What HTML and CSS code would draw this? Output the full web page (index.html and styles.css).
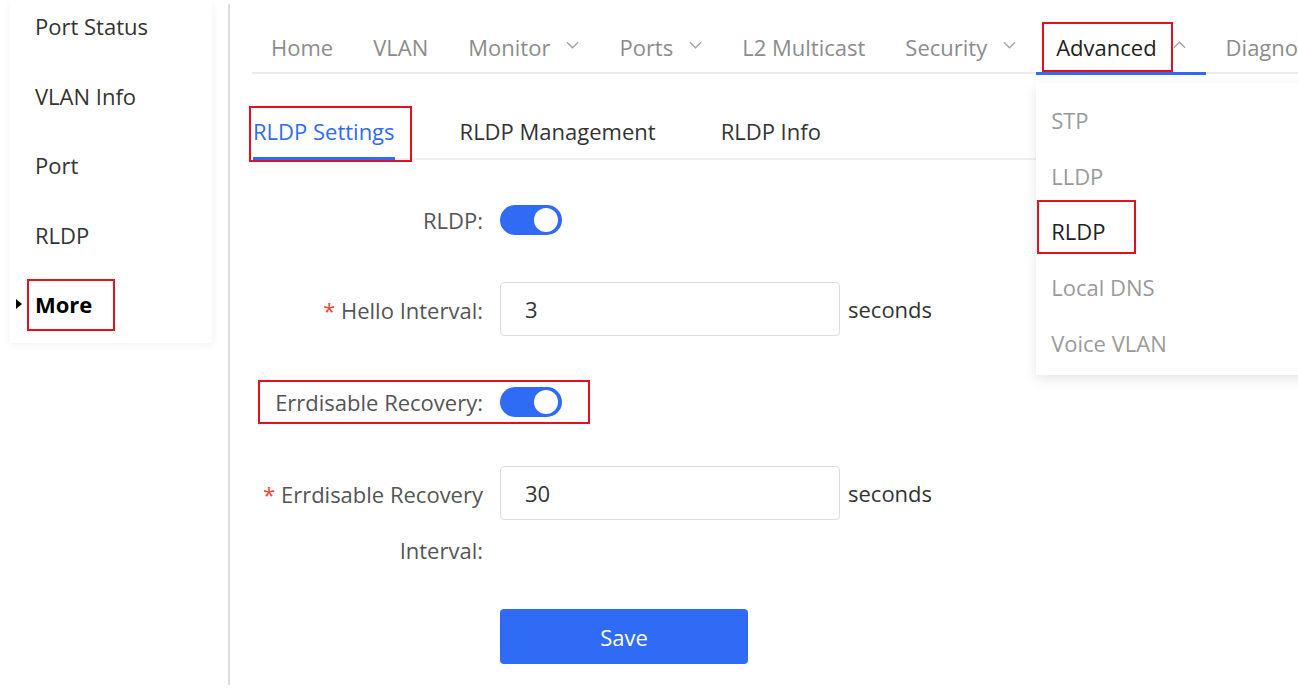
FILE: index.html
```html
<!DOCTYPE html>
<html lang="en">
<head>
    <meta charset="UTF-8">
    <meta name="viewport" content="width=device-width, initial-scale=1.0">
    <title>RLDP Settings</title>
    <link rel="stylesheet" href="styles.css">
</head>
<body>
    <div class="page">
        <aside class="side">
            <ul class="side_menu">
                <li class="side_item">Port Status</li>
                <li class="side_item">VLAN Info</li>
                <li class="side_item">Port</li>
                <li class="side_item">RLDP</li>
                <li class="side_item side_item-more"><span class="mark mark-more">More</span></li>
            </ul>
        </aside>

        <main class="main">
            <nav class="topnav">
                <span class="nav_item">Home</span>
                <span class="nav_item">VLAN</span>
                <span class="nav_item">Monitor
                    <svg class="chev" viewBox="0 0 14 8"><path d="M1 1l6 6 6-6"/></svg></span>
                <span class="nav_item">Ports
                    <svg class="chev" viewBox="0 0 14 8"><path d="M1 1l6 6 6-6"/></svg></span>
                <span class="nav_item">L2 Multicast</span>
                <span class="nav_item">Security
                    <svg class="chev" viewBox="0 0 14 8"><path d="M1 1l6 6 6-6"/></svg></span>
                <span class="nav_item nav_item-active"><span class="mark mark-adv">Advanced</span>
                    <svg class="chev" viewBox="0 0 14 8"><path d="M1 7l6-6 6 6"/></svg>

                    <!-- open dropdown of Advanced -->
                    <ul class="dropdown">
                        <li class="dropdown_item">STP</li>
                        <li class="dropdown_item">LLDP</li>
                        <li class="dropdown_item dropdown_item-current"><span class="mark mark-drop">RLDP</span></li>
                        <li class="dropdown_item">Local DNS</li>
                        <li class="dropdown_item">Voice VLAN</li>
                    </ul>
                </span>
                <span class="nav_item">Diagnostics</span>
            </nav>

            <div class="tabs">
                <span class="tab tab-active"><span class="mark mark-tab">RLDP Settings</span></span>
                <span class="tab">RLDP Management</span>
                <span class="tab">RLDP Info</span>
            </div>

            <div class="form">
                <div class="form_row form_row-first">
                    <label class="form_label">RLDP:</label>
                    <span class="switch"></span>
                </div>

                <div class="form_row">
                    <label class="form_label"><i class="req">*</i> Hello Interval:</label>
                    <input class="form_input" type="text" value="3">
                    <span class="unit">seconds</span>
                </div>

                <div class="form_row form_row-err">
                    <span class="mark mark-err"></span>
                    <label class="form_label">Errdisable Recovery:</label>
                    <span class="switch"></span>
                </div>

                <div class="form_row">
                    <label class="form_label"><i class="req">*</i> Errdisable Recovery Interval:</label>
                    <input class="form_input" type="text" value="30">
                    <span class="unit">seconds</span>
                </div>

                <div class="form_actions">
                    <button class="btn_save" type="button">Save</button>
                </div>
            </div>
        </main>
    </div>
</body>
</html>
```

FILE: styles.css
```css
body{
    margin: 0;
    padding: 0;
    background-color: #ffffff;
    font-family: "Open Sans", "Noto Sans", Arial, sans-serif;
    font-size: 22px;
    color: #333;
    overflow: hidden;
}

ul{
    list-style: none;
    margin: 0;
    padding: 0;
}

.page{
    display: flex;
    width: 1298px;
    height: 696px;
    overflow: hidden;
}

/* annotation boxes */
.mark{
    position: relative;
}

.mark::after{
    content: "";
    position: absolute;
    border: 2px solid #e3101f;
    pointer-events: none;
}

.mark-more::after{ left: -8px; right: -23px; top: -10px; bottom: -12px; }
.mark-adv::after{ left: -14px; right: -16px; top: -10px; bottom: -10px; }
.mark-drop::after{ left: -14px; right: -31px; top: -16px; bottom: -8px; }
.mark-tab::after{ left: -4px; right: -17px; top: -10px; bottom: -16px; }

/* side menu */
.side{
    width: 218px;
    padding-left: 10px;
    flex-shrink: 0;
}

.side_menu{
    width: 202px;
    height: 343px;
    background-color: #fff;
    box-shadow: 0px 2px 8px rgba(0, 0, 0, 0.06);
    box-sizing: border-box;
    padding-left: 25px;
}

.side_item{
    height: 69.5px;
    line-height: 53px;
    color: #333;
}

.side_item-more{
    position: relative;
    font-weight: bold;
    color: #000;
}

.side_item-more::before{
    content: "";
    position: absolute;
    left: -19px;
    top: 21px;
    border-left: 6px solid #000;
    border-top: 5px solid transparent;
    border-bottom: 5px solid transparent;
}

/* main area */
.main{
    height: 685px;
    border-left: 2px solid #dcdcdc;
    border-image: linear-gradient(to bottom, transparent 5px, #dcdcdc 5px) 1;
    padding-left: 22px;
    flex: 1;
    min-width: 0;
    overflow: hidden;
}

.topnav{
    display: flex;
    height: 74px;
    border-bottom: 2px solid #ebebeb;
    white-space: nowrap;
    box-sizing: border-box;
    padding-top: 19px;
}

.nav_item{
    position: relative;
    display: flex;
    align-items: center;
    height: 55px;
    padding: 0 20px;
    color: #8c8c8c;
    box-sizing: border-box;
    flex-shrink: 0;
}

.nav_item:first-child{
    padding-left: 19px;
}

.nav_item-active{
    color: #222;
    border-bottom: 3px solid #2f6bf5;
    height: 56px;
    padding-top: 2px;
}

.chev{
    width: 13px;
    height: 8px;
    margin-left: 16px;
    margin-top: -4px;
    fill: none;
    stroke: #a0a0a0;
    stroke-width: 1.3;
}

.dropdown{
    position: absolute;
    top: 64px;
    left: 0;
    width: 280px;
    height: 292px;
    padding-top: 10px;
    box-sizing: border-box;
    background-color: #fff;
    box-shadow: 0px 4px 12px rgba(0, 0, 0, 0.1);
    z-index: 5;
}

.dropdown_item{
    height: 55.7px;
    line-height: 55px;
    padding-left: 15px;
    color: #9a9a9a;
}

.dropdown_item-current{
    color: #222;
}

/* sub tabs */
.tabs{
    display: flex;
    margin-top: 31px;
    height: 53px;
    border-bottom: 2px solid #eef0f4;
    width: 785px;
}

.tab{
    line-height: 52px;
    margin-right: 65px;
    color: #333;
    white-space: nowrap;
}

.tab-active{
    color: #2f6bf5;
    border-bottom: 3px solid #2f6bf5;
    margin-bottom: -2px;
    margin-left: 1px;
}

/* form */
.form{
    padding-top: 32px;
}

.form_row{
    position: relative;
    display: flex;
    align-items: flex-start;
    margin-bottom: 36px;
}

.form_row-first{
    margin-bottom: 34px;
}

.form_label{
    width: 231px;
    margin-right: 17px;
    text-align: right;
    line-height: 56px;
    color: #555;
    flex-shrink: 0;
}

.req{
    font-style: normal;
    color: #f0462f;
}

.switch{
    position: relative;
    width: 62px;
    height: 30px;
    margin-top: 13px;
    border-radius: 15px;
    background-color: #2f6bf5;
}

.switch::after{
    content: "";
    position: absolute;
    right: 4px;
    top: 3px;
    width: 24px;
    height: 24px;
    border-radius: 50%;
    background-color: #fff;
}

.mark-err{
    position: absolute;
    left: 0;
    top: 0;
}

.mark-err::after{
    left: 6px;
    top: 6px;
    width: 328px;
    height: 40px;
}

.form_input{
    width: 340px;
    height: 54px;
    box-sizing: border-box;
    border: 1px solid #dcdcdc;
    border-radius: 4px;
    padding: 0 24px;
    font-family: inherit;
    font-size: 22px;
    color: #333;
    outline: none;
}

.unit{
    line-height: 54px;
    margin-left: 8px;
    color: #333;
}

.form_actions{
    padding-left: 248px;
    margin-top: -5px;
}

.btn_save{
    width: 248px;
    height: 55px;
    border: none;
    border-radius: 4px;
    background-color: #2f6bf5;
    color: #fff;
    font-family: inherit;
    font-size: 22px;
    cursor: pointer;
}
```
